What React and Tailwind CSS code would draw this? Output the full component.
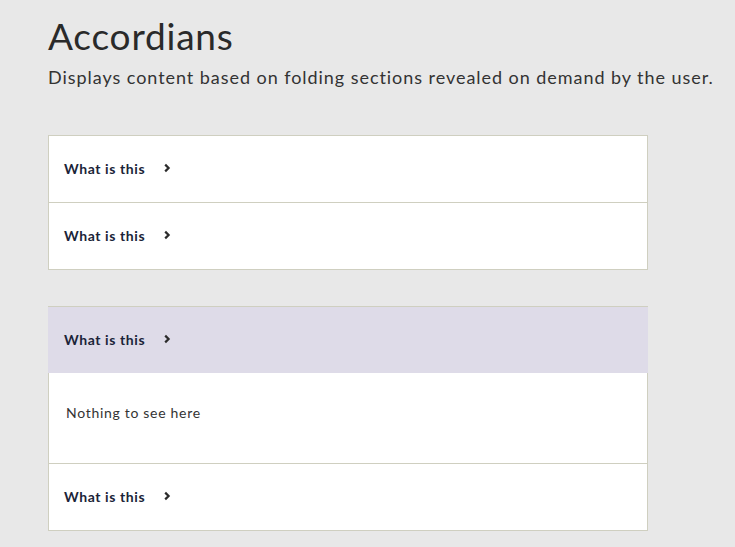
import React from "react";

function Chevron() {
  return (
    <svg width="8" height="10" viewBox="0 0 8 10" className="ml-[18px]" aria-hidden="true">
      <path d="M2.2 1.6 L5.6 5 L2.2 8.4" fill="none" stroke="#2b2b2b" strokeWidth="2.2" strokeLinecap="butt" strokeLinejoin="miter" />
    </svg>
  );
}

function Header({ active, className = "" }) {
  return (
    <div className={`flex items-center pb-[2px] ${active ? "bg-[#dedbe8] pl-[16px]" : "bg-white pl-[15px]"} ${className}`}>
      <span className="text-[14px] font-bold tracking-[0.6px] text-[#1b2438]">What is this</span>
      <Chevron />
    </div>
  );
}

export default function App() {
  return (
    <div className="min-h-[547px] bg-[#e8e8e8] pl-[48px] pt-[14px] font-['Lato',sans-serif] text-[#333]">
      <h1 className="text-[37px] leading-[44px] tracking-[0.8px] text-[#2a2a2a]">Accordians</h1>
      <p className="mt-[6px] text-[18px] leading-[26px] tracking-[0.95px] text-[#333]">
        Displays content based on folding sections revealed on demand by the user.
      </p>

      <div className="mt-[45px] w-[600px] border border-[#cfcfc0] bg-white">
        <Header className="h-[67px] border-b border-[#cfcfc0]" />
        <Header className="h-[66px]" />
      </div>

      <div className="mt-[36px] w-[600px] border-t border-[#cfcfc0]">
        <Header active className="h-[66px]" />
        <div className="flex h-[91px] items-center border-x border-b border-[#cfcfc0] bg-white pb-[12px] pl-[17px]">
          <span className="text-[14px] tracking-[0.7px] text-[#333]">Nothing to see here</span>
        </div>
        <Header className="h-[67px] border-x border-b border-[#cfcfc0]" />
      </div>
    </div>
  );
}
